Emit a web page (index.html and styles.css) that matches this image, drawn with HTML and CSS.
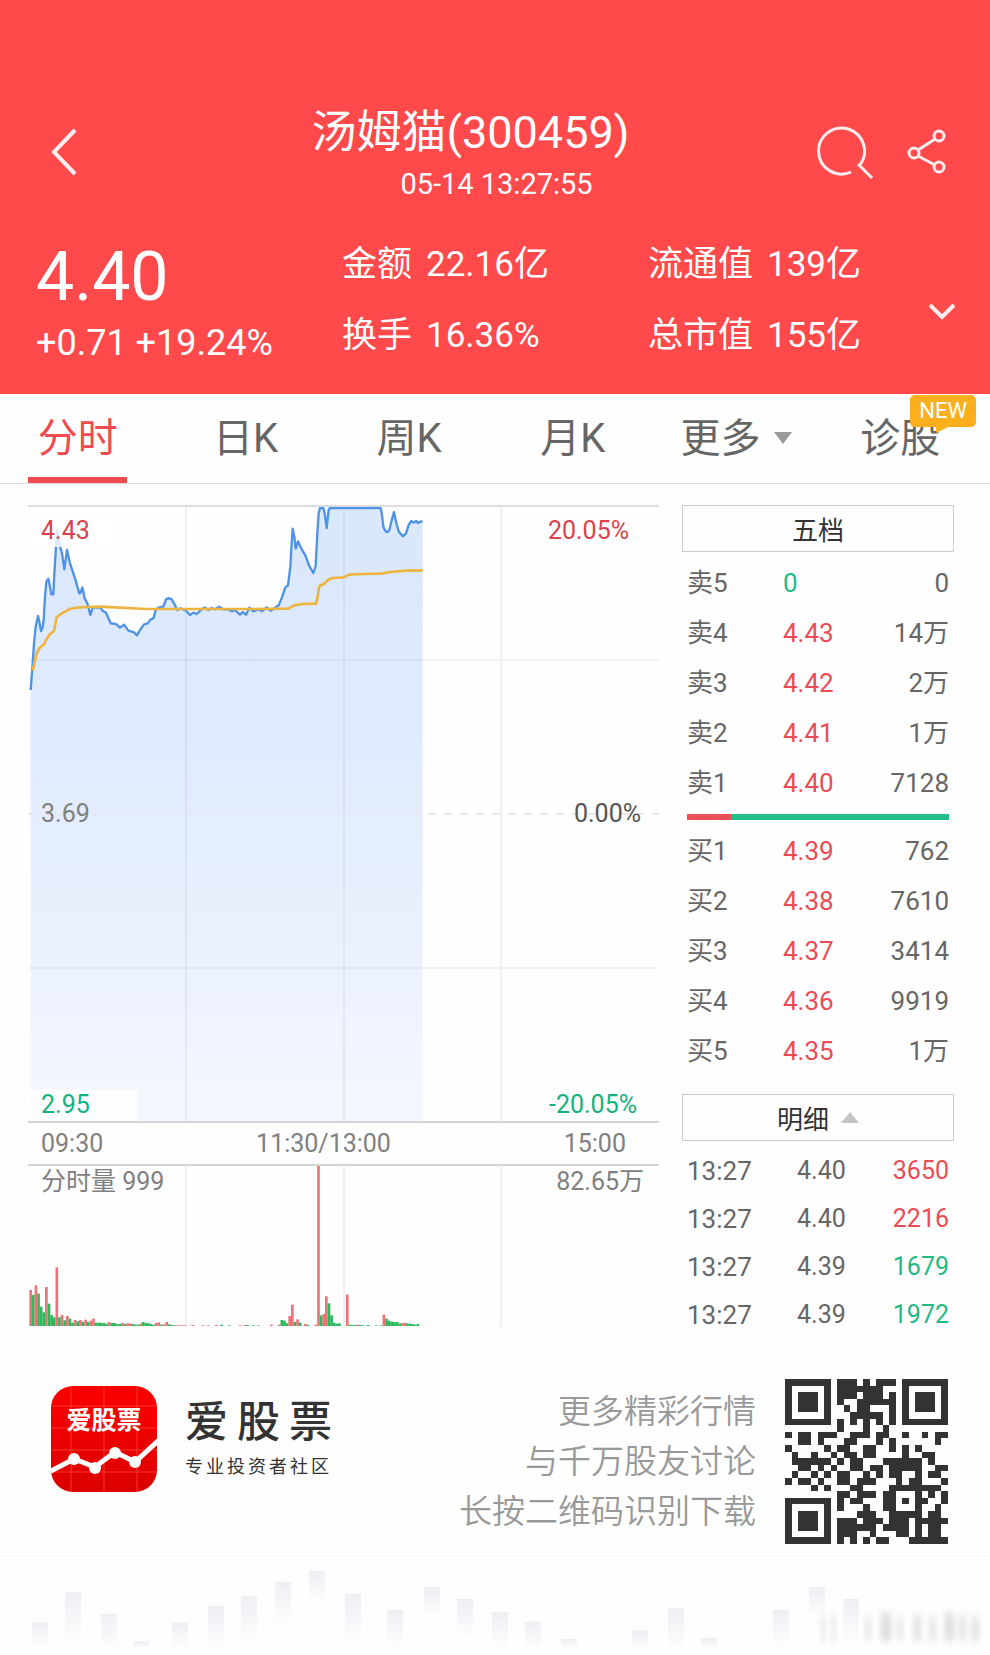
FILE: index.html
```
<!DOCTYPE html>
<html lang="zh-CN">
<head>
    <meta charset="UTF-8">
    <meta name="viewport" content="width=device-width, initial-scale=1.0">
    <title>汤姆猫(300459)</title>
    <link rel="stylesheet" href="styles.css">
</head>
<body>
    <header class="header">
        <div class="topbar">
            <button class="icon-btn" aria-label="返回">
                <svg width="28" height="50" viewBox="0 0 28 50"><path d="M25 3L4 25l21 22"/></svg>
            </button>
            <div class="title">
                <h1>汤姆猫(300459)</h1>
                <p>05-14 13:27:55</p>
            </div>
            <div class="actions">
                <button class="icon-btn" aria-label="搜索">
                    <svg width="58" height="58" viewBox="0 0 58 58"><path d="M34 49A23 23 0 1 1 42 43M41 41l14 14"/></svg>
                </button>
                <button class="icon-btn" aria-label="分享">
                    <svg width="40" height="46" viewBox="0 0 40 46"><circle cx="32" cy="7" r="5"/><circle cx="7" cy="24" r="5"/><circle cx="32" cy="38" r="5"/><path d="M28 10L11 21M11 27l17 9"/></svg>
                </button>
            </div>
        </div>
        <div class="quote">
            <div class="price">
                <strong>4.40</strong>
                <span>+0.71 +19.24%</span>
            </div>
            <dl>
                <div><dt>金额</dt><dd>22.16亿</dd></div>
                <div><dt>换手</dt><dd>16.36%</dd></div>
            </dl>
            <dl>
                <div><dt>流通值</dt><dd>139亿</dd></div>
                <div><dt>总市值</dt><dd>155亿</dd></div>
            </dl>
            <button class="icon-btn more" aria-label="展开">
                <svg width="30" height="20" viewBox="0 0 30 20"><path d="M3 3l12 12L27 3"/></svg>
            </button>
        </div>
    </header>

    <nav class="tabs">
        <a href="#" class="active">分时</a>
        <a href="#">日K</a>
        <a href="#">周K</a>
        <a href="#">月K</a>
        <a href="#">更多<i class="arrow-down"></i></a>
        <a href="#"><span class="diagnose">诊股<b class="badge">NEW</b></span></a>
    </nav>

    <main class="main">
        <section class="chart">
            <div class="price-chart">
                <svg viewBox="24 51 1893 1842" preserveAspectRatio="none">
                    <defs>
                        <linearGradient id="area" x1="0" y1="0" x2="0" y2="1">
                            <stop offset="0" stop-color="#dae8fc"/>
                            <stop offset="0.4" stop-color="#e0ebfd"/>
                            <stop offset="1" stop-color="#f4f7ff"/>
                        </linearGradient>
                    </defs>
                    <polygon id="priceArea" fill="url(#area)"/>
                    <path class="grid" d="M498 45V1896M972 45V1896M1444 45V1896M24 510H1917M24 1434H1917"/>
                    <path class="zero" d="M24 972H1917"/>
                    <polyline id="priceLine" class="line"/>
                    <polyline class="avg" points="38,542 44,515 50,490 58,475 72,463 80,447 90,432 102,423 110,382 120,374 136,364 150,357 170,353 200,351 240,350 300,353 380,357 500,357 700,357 805,356 822,346 850,342 888,341 893,320 898,288 912,282 924,270 938,264 972,262 986,254 1030,252 1085,251 1110,246 1160,242 1208,241"/>
                </svg>
                <span class="label high">4.43</span>
                <span class="label high-pct">20.05%</span>
                <span class="label mid">3.69</span>
                <span class="label mid-pct">0.00%</span>
                <span class="label low">2.95</span>
                <span class="label low-pct">-20.05%</span>
            </div>
            <div class="times">
                <span>09:30</span><span class="noon">11:30/13:00</span><span>15:00</span>
            </div>
            <div class="volume-chart">
                <svg id="volume" viewBox="24 18 1893 489" preserveAspectRatio="none">
                    <path class="grid" d="M498 12V501M972 12V501M1444 12V501"/>
                </svg>
                <span class="label vol">分时量 999</span>
                <span class="label vol-max">82.65万</span>
            </div>
        </section>

        <aside class="side">
            <button class="side-title">五档</button>
            <table class="orders">
                <tr><th>卖5</th><td class="down">0</td><td>0</td></tr>
                <tr><th>卖4</th><td class="up">4.43</td><td>14万</td></tr>
                <tr><th>卖3</th><td class="up">4.42</td><td>2万</td></tr>
                <tr><th>卖2</th><td class="up">4.41</td><td>1万</td></tr>
                <tr><th>卖1</th><td class="up">4.40</td><td>7128</td></tr>
            </table>
            <div class="ratio"></div>
            <table class="orders">
                <tr><th>买1</th><td class="up">4.39</td><td>762</td></tr>
                <tr><th>买2</th><td class="up">4.38</td><td>7610</td></tr>
                <tr><th>买3</th><td class="up">4.37</td><td>3414</td></tr>
                <tr><th>买4</th><td class="up">4.36</td><td>9919</td></tr>
                <tr><th>买5</th><td class="up">4.35</td><td>1万</td></tr>
            </table>
            <button class="side-title detail-title">明细<i class="arrow-up"></i></button>
            <table class="orders details">
                <tr><th>13:27</th><td>4.40</td><td class="up">3650</td></tr>
                <tr><th>13:27</th><td>4.40</td><td class="up">2216</td></tr>
                <tr><th>13:27</th><td>4.39</td><td class="down">1679</td></tr>
                <tr><th>13:27</th><td>4.39</td><td class="down">1972</td></tr>
            </table>
        </aside>
    </main>

    <footer class="footer">
        <svg class="logo" viewBox="0 0 106 106">
            <defs>
                <linearGradient id="red" x1="0" y1="0" x2="0" y2="1">
                    <stop offset="0" stop-color="#fb0000"/>
                    <stop offset="1" stop-color="#dc0000"/>
                </linearGradient>
                <clipPath id="round"><rect width="106" height="106" rx="22"/></clipPath>
            </defs>
            <g clip-path="url(#round)">
                <rect width="106" height="106" fill="url(#red)"/>
                <path d="M20 0V106M53 0V106M86 0V106M0 20H106M0 42H106M0 64H106M0 86H106" stroke="#ff5a4a" stroke-opacity=".6"/>
                <path d="M-2 86L23 73L44 81L64 66L84 76L108 54" fill="none" stroke="#fff" stroke-width="5"/>
                <g fill="#fff"><circle cx="23" cy="73" r="6"/><circle cx="44" cy="82" r="6"/><circle cx="64" cy="67" r="6"/><circle cx="84" cy="76" r="6"/></g>
            </g>
            <text x="53" y="43" text-anchor="middle">爱股票</text>
        </svg>
        <div class="brand">
            <h2>爱股票</h2>
            <p>专业投资者社区</p>
        </div>
        <p class="slogan">更多精彩行情<br>与千万股友讨论<br>长按二维码识别下载</p>
        <svg id="qr" class="qr" viewBox="0 0 25 25" preserveAspectRatio="none" shape-rendering="crispEdges"></svg>
    </footer>
    <svg id="skyline" class="skyline" viewBox="0 0 990 98" preserveAspectRatio="none">
        <defs>
            <linearGradient id="fade" x1="0" y1="0" x2="0" y2="1">
                <stop offset="0" stop-color="#eeeff4"/>
                <stop offset="1" stop-color="#fdfdfe"/>
            </linearGradient>
            <filter id="soft" x="-1" y="-1" width="3" height="3"><feGaussianBlur stdDeviation="3 4"/></filter>
        </defs>
        <path d="M0 7H990M0 40H990M160 73H860" stroke="#f8f8f8"/>
    </svg>

    <script>
        const NS = "http://www.w3.org/2000/svg";

        function addRect(parent, x, y, w, h, fill) {
            const r = document.createElementNS(NS, "rect");
            r.setAttribute("x", x);
            r.setAttribute("y", y);
            r.setAttribute("width", w);
            r.setAttribute("height", h);
            r.setAttribute("fill", fill);
            parent.appendChild(r);
            return r;
        }

        // price line and the area under it
        const price = "32,600 38,520 42,460 47,410 54,378 58,395 63,423 68,412 71,390 75,320 79,275 85,266 89,285 94,313 100,313 103,250 108,170 112,120 120,170 126,190 133,238 141,180 150,220 164,262 178,310 182,308 187,292 194,325 202,340 211,375 218,353 240,352 248,362 258,368 272,400 288,402 300,413 312,404 325,422 342,427 351,436 360,420 372,403 383,400 392,388 400,385 408,358 418,352 430,350 438,328 446,324 455,328 462,340 472,360 482,355 498,362 510,375 520,368 530,372 545,358 555,353 565,360 575,354 585,358 597,350 610,358 625,358 635,364 645,360 660,374 668,366 678,374 688,353 700,364 715,358 726,364 740,352 752,362 764,354 776,346 786,322 796,292 804,286 811,230 815,160 818,116 823,140 827,176 834,154 842,172 856,196 868,228 880,249 887,228 892,130 896,70 900,54 910,54 914,70 920,114 926,60 930,54 1082,54 1086,75 1090,110 1096,123 1102,127 1108,120 1114,95 1122,66 1128,95 1136,125 1149,139 1158,130 1166,105 1174,93 1181,98 1188,93 1195,99 1202,94 1208,95";
        document.getElementById("priceLine").setAttribute("points", price);
        document.getElementById("priceArea").setAttribute("points", "32,1896 " + price + " 1208,1896");

        // volume bars: [minute, height, r = up / g = down]
        const volume = [
            [0,108,"r"],[1,93,"g"],[2,122,"r"],[3,97,"g"],[4,58,"g"],[5,41,"g"],[6,117,"r"],[7,67,"g"],[8,33,"g"],[9,26,"g"],
            [10,176,"r"],[11,26,"g"],[12,33,"r"],[13,17,"g"],[14,30,"r"],[15,22,"g"],[16,10,"g"],[17,18,"r"],[18,14,"g"],[19,18,"r"],
            [20,13,"g"],[21,19,"r"],[22,12,"g"],[23,16,"r"],[24,22,"r"],[25,10,"g"],[26,10,"g"],[27,10,"g"],[28,9,"g"],[29,7,"g"],
            [30,12,"r"],[31,9,"g"],[32,9,"g"],[33,6,"g"],[34,6,"g"],[35,9,"r"],[36,6,"g"],[37,8,"r"],[38,8,"r"],[39,6,"g"],
            [40,4,"g"],[41,4,"g"],[42,7,"r"],[43,12,"g"],[44,9,"g"],[45,8,"g"],[46,6,"g"],[47,4,"g"],[48,9,"r"],[49,11,"r"],
            [50,4,"g"],[51,5,"r"],[52,12,"r"],[53,5,"g"],[54,3,"g"],[55,2,"g"],[56,2,"r"],[57,2,"r"],[58,2,"r"],[59,2,"r"],
            [62,3,"r"],[66,2,"r"],[68,2,"r"],[71,3,"r"],[73,4,"g"],[76,2,"g"],[80,2,"r"],[82,3,"r"],[83,3,"g"],[85,2,"g"],
            [87,2,"g"],[92,4,"r"],[95,4,"r"],[96,18,"g"],[97,16,"g"],[98,8,"g"],[99,30,"r"],[100,64,"r"],[101,12,"g"],[102,20,"r"],
            [103,10,"g"],[105,6,"r"],[106,3,"g"],[109,4,"r"],[110,483,"r"],[111,32,"g"],[112,36,"r"],[113,89,"r"],[114,68,"g"],
            [115,32,"g"],[116,10,"g"],[117,7,"g"],[118,8,"g"],[121,94,"r"],[122,4,"g"],[123,3,"g"],[124,3,"g"],[125,4,"r"],
            [126,3,"g"],[127,2,"g"],[129,3,"g"],[132,2,"g"],[134,2,"g"],[135,34,"r"],[136,22,"g"],[137,16,"g"],[138,13,"g"],
            [139,12,"g"],[140,12,"g"],[141,8,"g"],[142,9,"r"],[143,10,"r"],[144,8,"g"],[145,7,"g"],[146,6,"g"],[147,4,"g"],[148,6,"g"]
        ];
        const volumeSvg = document.getElementById("volume");
        volume.forEach(([i, h, c]) => {
            addRect(volumeSvg, 28 + i * 7.85, 498 - h, 8, h, c === "r" ? "#ee7376" : "#2db85c");
        });

        const code = [
            "1111111011101011101111111",
            "1000001011111110001000001",
            "1011101011101110101011101",
            "1011101010011111101011101",
            "1011101001011000101011101",
            "1000001000111110101000001",
            "1111111010101010101111111",
            "0000000010001001000000000",
            "1011011100111011001001011",
            "0011010001100010100000010",
            "1000001011001100101010000",
            "0100100101101100001001100",
            "0111111010110001111110100",
            "0011010100110110111110011",
            "0100101011001010110010110",
            "1011010011011100010110001",
            "0000101000110000111111110",
            "0000000011011101100010101",
            "1111111010110001101011001",
            "1000001010001001100010010",
            "1011101000011100111110110",
            "1011101011101110111011111",
            "1011101011111101111010110",
            "1000001011100100011010110",
            "1111111010101011000111111"
        ];
        const qr = document.getElementById("qr");
        code.forEach((row, y) => {
            [...row].forEach((bit, x) => {
                if (bit === "1") addRect(qr, x, y, 1, 1, "#333");
            });
        });

        // pale bars along the bottom: [left, top, bottom]
        const skyline = document.getElementById("skyline");
        [
            [32,73,99],[65,43,93],[101,65,98],[133,92,99],[172,74,98],[208,57,98],[241,47,92],[275,33,72],[309,22,50],
            [345,45,92],[387,61,98],[424,38,67],[457,50,88],[492,63,98],[525,73,99],[561,90,99],[632,81,99],[668,59,99],
            [701,89,99],[773,61,98],[809,38,67],[843,50,93]
        ].forEach(([x, top, bottom]) => addRect(skyline, x, top, 16, bottom - top, "url(#fade)"));

        // faded mark in the corner
        [[822,66,3,28],[832,66,3,28],[866,68,4,24],[881,64,10,28],[898,68,4,24],[914,66,6,26],[930,68,5,24],[945,64,9,28],[960,66,5,26],[972,68,6,24]]
            .forEach(([x, y, w, h]) => addRect(skyline, x, y, w, h, "#dcdcdc").setAttribute("filter", "url(#soft)"));
    </script>
</body>
</html>
```
FILE: styles.css
```
* {
    box-sizing: border-box;
}
body {
    margin: 0;
    background-color: #fefefe;
    color: #666;
    font-family: Roboto, "Noto Sans CJK SC", sans-serif;
    font-size: 26px;
}
h1, h2, p, dl, dd {
    margin: 0;
    font-weight: normal;
}
a {
    color: inherit;
    text-decoration: none;
}
button {
    padding: 0;
    border: none;
    background: none;
    font: inherit;
    cursor: pointer;
}
svg {
    display: block;
}

/* header */
.header {
    padding: 105px 33px 23px 36px;
    background-color: #ff494b;
    color: #fff;
}
.topbar {
    display: grid;
    grid-template-columns: 140px 1fr 140px;
}
.icon-btn {
    height: 94px;
}
.icon-btn svg {
    fill: none;
    stroke: #ffecec;
    stroke-width: 4;
}
.topbar > .icon-btn {
    padding-left: 14px;
    justify-self: start;
}
.title {
    text-align: center;
}
.title h1 {
    padding-right: 52px;
    font-size: 45px;
    line-height: 56px;
}
.title p {
    font-size: 29px;
    line-height: 46px;
}
.actions {
    display: flex;
    justify-content: flex-end;
    gap: 32px;
    padding-right: 10px;
}
.actions svg {
    stroke-width: 3;
}
.quote {
    display: grid;
    grid-template-columns: 306px 306px 1fr 30px;
    margin-top: 22px;
}
.price {
    padding-top: 10px;
}
.price strong {
    display: block;
    font-size: 68px;
    font-weight: 400;
    line-height: 76px;
}
.price span {
    font-size: 36px;
    line-height: 56px;
}
.quote dl {
    font-size: 35px;
    line-height: 71px;
}
.quote dl div {
    display: flex;
    gap: 14px;
}
.more {
    align-self: end;
    margin-bottom: 12px;
}

/* tabs */
.tabs {
    display: grid;
    grid-template-columns: repeat(6, 1fr);
    height: 90px;
    padding-right: 8px;
    border-bottom: 1px solid #ddd;
    font-size: 40px;
    line-height: 90px;
    text-align: center;
}
.tabs .active {
    justify-self: center;
    width: 99px;
    height: 89px;
    margin-right: 8px;
    border-bottom: 6px solid #ef4b50;
    color: #ef4b50;
}
.arrow-down {
    display: inline-block;
    margin-left: 14px;
    border: 9px solid transparent;
    border-top: 12px solid #999;
    border-bottom: 0;
    vertical-align: 8px;
}
.diagnose {
    position: relative;
}
.badge {
    position: absolute;
    top: -20px;
    right: -36px;
    width: 66px;
    height: 32px;
    border-radius: 5px;
    background-color: #fcaf1d;
    color: #fff;
    font-size: 22px;
    font-weight: 400;
    line-height: 32px;
}
.badge::after {
    content: "";
    position: absolute;
    top: 31px;
    left: 26px;
    border-top: 7px solid #fcaf1d;
    border-right: 14px solid transparent;
}

/* charts */
.main {
    display: flex;
    gap: 23px;
    padding: 21px 36px 0 28px;
}
.chart {
    flex: 1;
    font-size: 25px;
}
.chart svg {
    width: 100%;
    height: 100%;
    fill: none;
}
.price-chart {
    position: relative;
    height: 618px;
    border-top: 2px solid #ddd;
    border-bottom: 2px solid #d4d4d4;
}
.grid {
    stroke: #8296aa;
    stroke-opacity: 0.15;
    stroke-width: 5;
}
.zero {
    stroke: #ecdde2;
    stroke-width: 4;
    stroke-dasharray: 24 24;
}
.line {
    stroke: #4f93e6;
    stroke-width: 7;
    stroke-linejoin: round;
}
.avg {
    stroke: #edb440;
    stroke-width: 8;
    stroke-linejoin: round;
}
.label {
    position: absolute;
    line-height: 32px;
    color: #808080;
}
.high, .low {
    left: 0;
    width: 109px;
    padding-left: 13px;
    background-color: rgba(255, 255, 255, 0.8);
}
.high {
    top: 8px;
    width: 90px;
    color: #d9434d;
}
.high-pct {
    top: 8px;
    right: 30px;
    color: #d9434d;
}
.mid, .mid-pct {
    top: 291px;
}
.mid {
    left: 13px;
}
.mid-pct {
    right: 18px;
    color: #555;
}
.low, .low-pct {
    bottom: 0;
    color: #14b27d;
}
.low-pct {
    right: 22px;
}
.times {
    display: flex;
    justify-content: space-between;
    padding: 0 33px 0 13px;
    line-height: 41px;
    color: #808080;
}
.noon {
    margin-right: 20px;
}
.volume-chart {
    position: relative;
    height: 165px;
    border-top: 2px solid #d4d4d4;
}
.vol {
    top: 0;
    left: 13px;
}
.vol-max {
    top: 0;
    right: 15px;
}

/* five-level quotes */
.side {
    width: 272px;
}
.side-title {
    display: flex;
    justify-content: center;
    align-items: center;
    gap: 12px;
    width: 100%;
    height: 47px;
    border: 1px solid #ccc;
    color: #333;
}
.arrow-up {
    border: 9px solid transparent;
    border-top: 0;
    border-bottom: 11px solid #c4c4c4;
}
.orders {
    width: 100%;
    padding: 0 5px;
    margin-top: 6px;
    border-collapse: separate;
    border-spacing: 0;
    table-layout: fixed;
}
.orders th, .orders td {
    height: 50px;
    padding: 0;
    line-height: 50px;
}
.orders th {
    width: 96px;
    font-weight: inherit;
    text-align: left;
}
.orders td:last-child {
    text-align: right;
}
.orders .up {
    color: #ea4c55;
}
.orders .down {
    color: #1fba86;
}
.ratio {
    height: 6px;
    margin: 6px 5px 0;
    background: linear-gradient(to right, #ea5055 17%, #22bf8b 17%);
}
.detail-title {
    margin-top: 18px;
}
.details {
    font-size: 25px;
}
.details th, .details td {
    height: 48px;
    line-height: 48px;
}
.details th {
    width: 110px;
    font-size: 26px;
}

/* footer */
.footer {
    display: flex;
    align-items: center;
    padding: 40px 42px 0 51px;
}
.logo {
    width: 106px;
    margin-bottom: 46px;
}
.logo text {
    fill: #fff;
    font-size: 25px;
    font-weight: 700;
}
.brand {
    margin: 0 0 44px 28px;
    color: #333;
}
.brand h2 {
    font-size: 43px;
    font-weight: 500;
    line-height: 54px;
    letter-spacing: 9px;
}
.brand p {
    font-size: 18px;
    line-height: 36px;
    letter-spacing: 3px;
}
.slogan {
    flex: 1;
    margin-right: 29px;
    color: #999;
    font-size: 33px;
    font-weight: 350;
    line-height: 50px;
    text-align: right;
}
.qr {
    width: 163px;
    height: 165px;
}
.skyline {
    width: 100%;
    height: 98px;
    margin-top: 5px;
}
```
